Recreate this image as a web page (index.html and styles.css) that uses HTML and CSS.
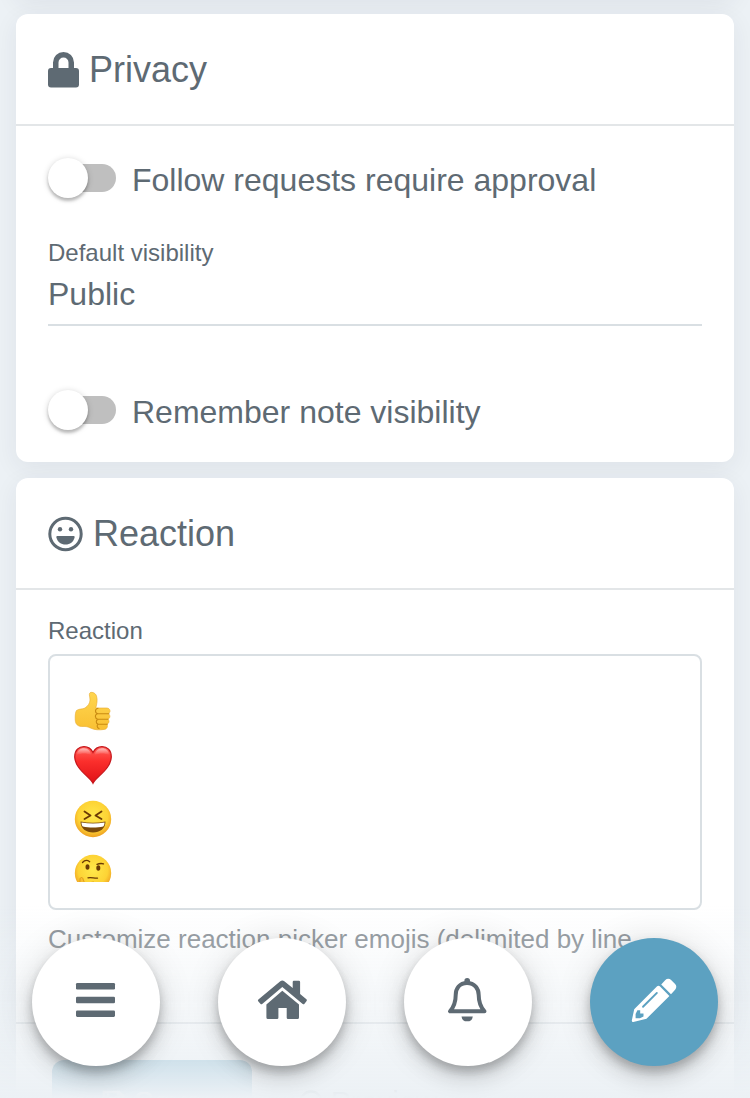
FILE: index.html
```html
<!DOCTYPE html>
<html lang="en">
<head>
<meta charset="utf-8">
<meta name="viewport" content="width=device-width, initial-scale=1">
<title>Settings</title>
<link rel="stylesheet" href="styles.css">
</head>
<body>
<main class="page">
  <section class="card card-previous"></section>

  <section class="card">
    <h2 class="card-title">
      <svg class="icon-lock" viewBox="0 0 31 36" aria-hidden="true"><path fill="currentColor" fill-rule="evenodd" d="M3 16h2v-5.500a10.500 10.500 0 0 1 21 0V16h2a3 3 0 0 1 3 3v13.500a3 3 0 0 1-3 3H3a3 3 0 0 1-3-3V19a3 3 0 0 1 3-3zm7.500 0h10v-5.500a5 5 0 0 0-10 0z"/></svg>
      Privacy
    </h2>
    <div class="card-body">
      <label class="switch"><input type="checkbox"><span>Follow requests require approval</span></label>
      <div class="field">
        <label class="field-label" for="visibility">Default visibility</label>
        <select class="field-select" id="visibility"><option>Public</option><option>Home</option><option>Followers</option></select>
      </div>
      <label class="switch"><input type="checkbox"><span>Remember note visibility</span></label>
    </div>
  </section>

  <section class="card">
    <h2 class="card-title">
      <svg class="icon-smile" viewBox="0 0 35 36" aria-hidden="true"><circle cx="17.500" cy="18" r="15.700" fill="none" stroke="currentColor" stroke-width="3"/><circle cx="12" cy="13.200" r="2.200" fill="currentColor"/><circle cx="23" cy="13.200" r="2.200" fill="currentColor"/><path fill="currentColor" d="M9.500 20h16c1 0 1.300.6 1.100 1.500C25.500 26 22 28.600 17.500 28.600S9.500 26 8.400 21.500C8.200 20.600 8.500 20 9.500 20z"/></svg>
      Reaction
    </h2>
    <div class="card-body reaction-body">
      <label class="field-label" for="reactions">Reaction</label>
      <div class="reaction-box">
        <textarea class="reaction-input" id="reactions"></textarea>
        <div class="emoji-list">
          <svg class="emoji" viewBox="0 0 38 40" role="img" aria-label="thumbs up">
            <defs><linearGradient id="skin" x1="0" y1="0" x2="0" y2="1"><stop offset="0" stop-color="#ffd650"/><stop offset="1" stop-color="#f9c033"/></linearGradient></defs>
            <path fill="url(#skin)" stroke="#e8a92c" stroke-width=".6" d="M2.500 19.500c2.500-2 6-1 8.500-2.500 3-2 5-5 5-8 0-3-1-5-.5-6.500 1-2.300 6-1 7 2.500 1.300 4 .3 8-.7 12h11c4 .2 4.200 5 1 5.700 3 .8 2.600 5-.2 5.500 2.300 1 1.600 4.600-1 5 1.800 1.200.6 5-2.200 5.200-5 .8-10 .6-14-1.400-3-1.500-5-1.700-9-1.500C2 35 1.200 31.500 1.200 27.500c0-3.500.2-6.500 1.300-8z"/>
            <path fill="none" stroke="#c98a12" stroke-width="1.100" stroke-linecap="round" d="M24 17.200c-3.500.8-3.200 5 0 5.500h11M23.500 22.800c-3 .8-2.700 5 .4 5.500H34M24 28.400c-2.500.7-2.200 4.300.3 4.800h9M24 33.400c-1.500 1-.9 3.400 1 4.200"/>
          </svg>
          <svg class="emoji" viewBox="0 0 38 40" role="img" aria-label="heart">
            <defs><linearGradient id="heart" x1="0" y1="0" x2="0" y2="1"><stop offset="0" stop-color="#ff625b"/><stop offset=".4" stop-color="#fb2f2c"/><stop offset="1" stop-color="#e01117"/></linearGradient><linearGradient id="shine" x1="0" y1="0" x2="0" y2="1"><stop offset="0" stop-color="#fff" stop-opacity=".6"/><stop offset="1" stop-color="#fff" stop-opacity="0"/></linearGradient></defs>
            <path fill="url(#heart)" stroke="#c5161b" stroke-width="1.200" d="M19 38.300C16 32 1 24 .7 12 .6 5 5 1.600 10 1.600c4.500 0 7.500 2.800 9 6 1.500-3.200 4.500-6 9-6 5 0 9.400 3.400 9.300 10.400C37 24 22 32 19 38.300z"/>
            <path fill="url(#shine)" d="M3 10c0-4.500 3-6.800 7-6.800s7 3 7 6.800c-4-2-10-2-14 0zm18 0c0-3.800 3-6.800 7-6.800s7 2.300 7 6.800c-4-2-10-2-14 0z"/>
          </svg>
          <svg class="emoji" viewBox="0 0 38 40" role="img" aria-label="laughing face">
            <defs><radialGradient id="face" cx=".5" cy=".42" r=".58"><stop offset="0" stop-color="#ffe84a"/><stop offset=".7" stop-color="#fdd335"/><stop offset="1" stop-color="#ee9f22"/></radialGradient></defs>
            <circle cx="19" cy="20" r="18.200" fill="url(#face)"/>
            <path fill="none" stroke="#6b3a05" stroke-width="1.800" stroke-linecap="round" stroke-linejoin="round" d="M10.500 12.500l6 4-6 3.500M27.500 12.500l-6 4 6 3.500"/>
            <path fill="#7a4a0b" d="M6.500 22.500c8 1.600 17 1.600 25 0C31.500 29.500 26 33.500 19 33.500S6.500 29.500 6.500 22.500z"/>
            <path fill="#fff" d="M7.500 23.500c7.500 1.400 15.500 1.400 23 0 0 1.600-.4 3-1.300 4-6 1.300-14.400 1.300-20.400 0-.9-1-1.300-2.400-1.300-4z"/>
          </svg>
          <svg class="emoji" viewBox="0 0 38 40" role="img" aria-label="thinking face">
            <circle cx="19" cy="20" r="18.200" fill="url(#face)"/>
            <ellipse cx="13.500" cy="14" rx="2" ry="2.800" fill="#6b3a05"/><ellipse cx="24.300" cy="15" rx="2" ry="2.800" fill="#6b3a05"/>
            <path fill="none" stroke="#6b3a05" stroke-width="1.300" stroke-linecap="round" d="M8.500 9.500c2-2.300 5-2.500 7.200-.8M23 11.400c2-.9 4-1.200 6.500-.6M14 24.800c3-1 6.500.8 9.500.3"/>
            <path fill="#f9c033" stroke="#d58a16" stroke-width=".7" d="M6 37V26c0-2 3-2 3 0l2 5 8-2c2 0 2 2 0 3l-6 3v8z"/>
          </svg>
        </div>
      </div>
      <p class="hint">Customize reaction picker emojis (delimited by line breaks).</p>
    </div>
    <div class="card-actions">
      <button class="action action-primary" type="button">
        <svg class="icon-action" viewBox="0 0 24 24" aria-hidden="true"><path fill="none" stroke="currentColor" stroke-width="2.500" d="M2 2h15l5 5v15H2zM6 2v7h10V2"/><circle cx="12" cy="16" r="3" fill="currentColor"/></svg>
        Save
      </button>
      <button class="action" type="button">
        <svg class="icon-action" viewBox="0 0 24 24" aria-hidden="true"><circle cx="12" cy="12" r="10.500" fill="none" stroke="currentColor" stroke-width="2.500"/><circle cx="12" cy="12" r="3" fill="currentColor"/></svg>
        Preview
      </button>
    </div>
  </section>
</main>

<nav class="nav" aria-label="Main">
  <button class="nav-button" type="button" aria-label="Menu">
    <svg class="nav-icon" viewBox="0 0 52 52" aria-hidden="true"><g fill="currentColor"><rect x="6" y="9" width="39" height="6.500" rx="1.300"/><rect x="6" y="22.800" width="39" height="6.500" rx="1.300"/><rect x="6" y="36.400" width="39" height="6.500" rx="1.300"/></g></svg>
  </button>
  <button class="nav-button" type="button" aria-label="Home">
    <svg class="nav-icon" viewBox="0 0 52 52" aria-hidden="true"><g fill="currentColor"><path d="M26.300 16.700L43 30.500V43.500a1.500 1.500 0 0 1-1.500 1.500H32a1.300 1.300 0 0 1-1.300-1.300V34h-8.300v9.700a1.300 1.300 0 0 1-1.300 1.300h-9.200a1.500 1.500 0 0 1-1.500-1.500V30.500z"/><path d="M24.300 7.200a3.300 3.300 0 0 1 4 0l8.400 6.900V8a1.200 1.200 0 0 1 1.200-1.200h5a1.200 1.200 0 0 1 1.200 1.200v12l6.300 5.200a1.300 1.300 0 0 1 .2 1.800L48.500 29.800a1.300 1.300 0 0 1-1.800.2L26.300 13.100 6.200 30a1.300 1.300 0 0 1-1.800-.2L2.200 27.200a1.300 1.300 0 0 1 .2-1.800z"/></g></svg>
  </button>
  <button class="nav-button" type="button" aria-label="Notifications">
    <svg class="nav-icon" viewBox="0 0 52 52" aria-hidden="true"><path fill="none" stroke="currentColor" stroke-width="4" stroke-linejoin="round" d="M25 9c-7.500 0-11.300 5.500-11.300 12 0 9.500-3 13.300-5.700 16.300h34.500c-2.800-3-5.800-6.800-5.800-16.300C36.700 14.500 32.700 9 25 9z"/><path fill="currentColor" d="M22.400 8V6.700a2.800 2.800 0 0 1 5.600 0V8zM19.500 42.400h11.300a5.700 5.700 0 0 1-11.300 0z"/></svg>
  </button>
  <button class="nav-button nav-button-primary" type="button" aria-label="Post">
    <svg class="nav-icon" viewBox="0 0 52 52" aria-hidden="true"><path fill="currentColor" fill-rule="evenodd" d="M31.800 12.300l9.600 9.600L18.500 44.800 5.300 48.100a1.400 1.400 0 0 1-1.500-1.500L6.200 35.200 29.100 12.300q1.300-1.200 2.700 0zM28.200 18.200L14.300 32.100a1 1 0 0 0 1.400 1.400L29.600 19.600a1 1 0 0 0-1.400-1.400zM9.400 36.200L7.600 40v4.300h4.300l3.600-1.700v-3.200h-3.300v-3.200z"/><path fill="currentColor" d="M33.200 10.500L37.400 6a4 4 0 0 1 5.700 0l4 4a4 4 0 0 1 0 5.700L43 20.200z"/></svg>
  </button>
</nav>
</body>
</html>
```
FILE: styles.css
```css
* {
  box-sizing: border-box;
}

body {
  margin: 0;
  height: 100vh;
  overflow: hidden;
  background: #ecf1f5;
  color: #5e6a73;
  font-family: "Liberation Sans", Arial, sans-serif;
}

button,
select,
textarea {
  font: inherit;
  color: inherit;
}

.page {
  display: flex;
  flex-direction: column;
  gap: 16px;
  padding: 0 16px;
}

.card {
  background: #fff;
  border-radius: 12px;
  box-shadow: 0 6px 24px rgba(39, 49, 64, 0.07);
}

/* Only the lower shadow of this card is in view. */
.card-previous {
  height: 40px;
  margin-top: -42px;
}

.card-title {
  display: flex;
  align-items: center;
  gap: 10px;
  margin: 0;
  height: 112px;
  padding: 2px 32px 0;
  border-bottom: 2px solid #e3e6e8;
  font-size: 36px;
  font-weight: 400;
  line-height: 44px;
}

.icon-lock {
  width: 31px;
  height: 36px;
}

.icon-smile {
  width: 35px;
  height: 36px;
}

.card-body {
  padding: 32px;
}

.switch {
  display: flex;
  align-items: center;
  gap: 16px;
  font-size: 32px;
  line-height: 40px;
}

.switch span {
  padding-top: 2px;
  margin-bottom: -2px;
}

.switch input {
  appearance: none;
  position: relative;
  display: flex;
  flex: none;
  width: 68px;
  height: 40px;
  margin: 0;
}

.switch input::before {
  content: "";
  z-index: 1;
  width: 40px;
  height: 40px;
  border-radius: 50%;
  background: #fff;
  box-shadow: 0 3px 3px rgba(0, 0, 0, 0.2), 0 1px 6px rgba(0, 0, 0, 0.18);
}

.switch input::after {
  content: "";
  position: absolute;
  inset: 6px 0 6px 8px;
  border-radius: 14px;
  background: #bfbfbf;
}

.field {
  display: flex;
  flex-direction: column;
  padding: 40px 0 64px;
}

.field-label {
  display: block;
  font-size: 24px;
  line-height: 30px;
}

.field-select {
  appearance: none;
  width: 100%;
  height: 58px;
  padding: 0 0 4px;
  border: 0;
  border-bottom: 2px solid #d9dfe3;
  border-radius: 0;
  background: transparent;
  font-size: 32px;
}

.reaction-body {
  padding-top: 26px;
}

.reaction-box {
  position: relative;
  margin-top: 8px;
}

.reaction-input {
  display: block;
  width: 100%;
  height: 256px;
  padding: 24px;
  border: 2px solid #d9dfe3;
  border-radius: 8px;
  background: transparent;
  resize: none;
}

.emoji-list {
  position: absolute;
  inset: 37px 26px 28px;
  display: flex;
  flex-direction: column;
  gap: 14px;
  overflow: hidden;
  pointer-events: none;
}

.emoji {
  flex: none;
  width: 38px;
  height: 40px;
}

.hint {
  margin: 13px 0 3px;
  color: #858c92;
  font-size: 26px;
  line-height: 32px;
}

.card-actions {
  display: flex;
  gap: 16px;
  padding: 36px;
  border-top: 2px solid #dde1e4;
}

.action {
  display: flex;
  align-items: center;
  justify-content: center;
  gap: 8px;
  width: 200px;
  height: 84px;
  border: 0;
  border-radius: 12px;
  background: #fff;
  font-size: 30px;
}

.action-primary {
  background: #5ca1c1;
  color: #fff;
}

.icon-action {
  width: 24px;
  height: 24px;
}

.nav {
  position: fixed;
  inset: auto 0 0;
  z-index: 2;
  display: flex;
  justify-content: space-between;
  padding: 32px;
  background: linear-gradient(to top, #ecf1f5, rgba(236, 241, 245, 0));
}

.nav-button {
  display: flex;
  align-items: center;
  justify-content: center;
  width: 128px;
  height: 128px;
  padding: 0 0 4px;
  border: 0;
  border-radius: 50%;
  background: #fff;
  box-shadow: 0 6px 10px rgba(0, 0, 0, 0.2), 0 2px 36px rgba(0, 0, 0, 0.12), 0 12px 20px rgba(0, 0, 0, 0.12);
}

.nav-button-primary {
  background: #5ca1c1;
  color: #fff;
}

.nav-icon {
  width: 52px;
  height: 52px;
}
```
